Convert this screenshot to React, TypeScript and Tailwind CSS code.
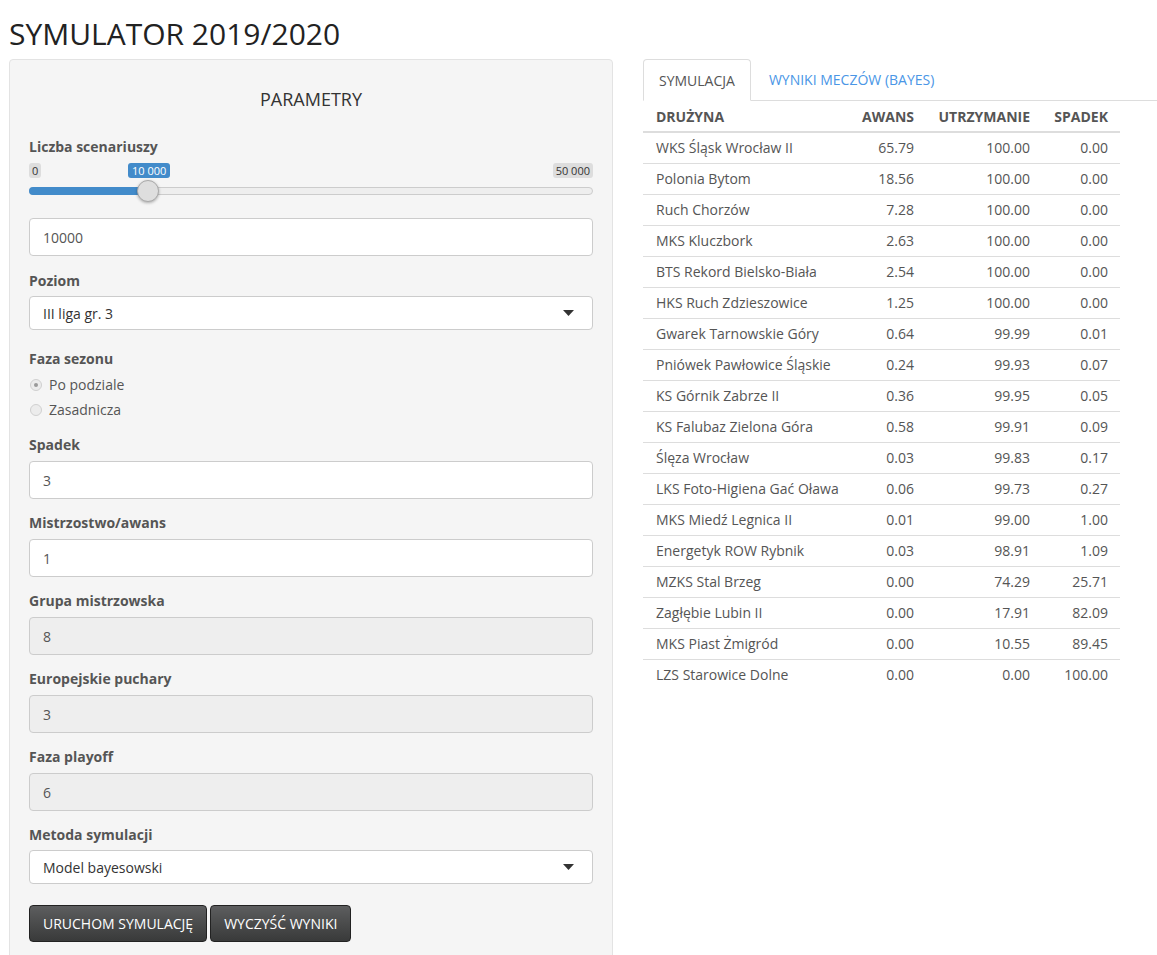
const teams: [string, string, string, string][] = [
  ['WKS Śląsk Wrocław II', '65.79', '100.00', '0.00'],
  ['Polonia Bytom', '18.56', '100.00', '0.00'],
  ['Ruch Chorzów', '7.28', '100.00', '0.00'],
  ['MKS Kluczbork', '2.63', '100.00', '0.00'],
  ['BTS Rekord Bielsko-Biała', '2.54', '100.00', '0.00'],
  ['HKS Ruch Zdzieszowice', '1.25', '100.00', '0.00'],
  ['Gwarek Tarnowskie Góry', '0.64', '99.99', '0.01'],
  ['Pniówek Pawłowice Śląskie', '0.24', '99.93', '0.07'],
  ['KS Górnik Zabrze II', '0.36', '99.95', '0.05'],
  ['KS Falubaz Zielona Góra', '0.58', '99.91', '0.09'],
  ['Ślęza Wrocław', '0.03', '99.83', '0.17'],
  ['LKS Foto-Higiena Gać Oława', '0.06', '99.73', '0.27'],
  ['MKS Miedź Legnica II', '0.01', '99.00', '1.00'],
  ['Energetyk ROW Rybnik', '0.03', '98.91', '1.09'],
  ['MZKS Stal Brzeg', '0.00', '74.29', '25.71'],
  ['Zagłębie Lubin II', '0.00', '17.91', '82.09'],
  ['MKS Piast Żmigród', '0.00', '10.55', '89.45'],
  ['LZS Starowice Dolne', '0.00', '0.00', '100.00'],
]

function Label({ children }: { children: React.ReactNode }) {
  return <div className="h-5 leading-5 font-bold text-[14px] text-[#555]">{children}</div>
}

// zwykłe pole tekstowe (albo wyłączone)
function Field({ label, value, disabled }: { label: string; value: string; disabled?: boolean }) {
  return (
    <div className="mb-[14px]">
      <Label>{label}</Label>
      <div
        className={`mt-[6px] h-[38px] flex items-center px-[13px] border border-[#cccccc] rounded-[4px] text-[14px] text-[#555] ${
          disabled ? 'bg-[#eeeeee]' : 'bg-white'
        }`}
      >
        {value}
      </div>
    </div>
  )
}

function Select({ value }: { value: string }) {
  return (
    <div className="mt-[5px] h-[34px] flex items-center justify-between pl-[13px] pr-[18px] bg-white border border-[#cccccc] rounded-[4px] text-[14px] text-[#333]">
      <span>{value}</span>
      <svg width="11" height="6" viewBox="0 0 11 6">
        <path d="M0 0 L11 0 L5.5 6 Z" fill="#333" />
      </svg>
    </div>
  )
}

function Radio({ label, checked }: { label: string; checked?: boolean }) {
  return (
    <div className="h-[25px] flex items-center gap-[7px] pl-[1px] text-[14px] text-[#555]">
      <span className="w-[12px] h-[12px] rounded-full border border-[#d0d0d0] bg-[#ececec] flex items-center justify-center">
        {checked && <span className="w-[4px] h-[4px] rounded-full bg-[#9a9a9a]" />}
      </span>
      {label}
    </div>
  )
}

function Slider() {
  return (
    <div className="relative h-[55px] mt-[6px]">
      <span className="absolute left-0 top-0 h-[15px] px-[3px] leading-[15px] text-[11px] text-[#333] bg-[#dddddd] rounded-[3px]">0</span>
      <span className="absolute left-[99px] top-0 h-[15px] px-[4px] leading-[15px] text-[11px] text-white bg-[#428bca] rounded-[3px]">10 000</span>
      <span className="absolute right-0 top-0 h-[15px] px-[3px] leading-[15px] text-[11px] text-[#333] bg-[#dddddd] rounded-[3px]">50 000</span>
      <div className="absolute left-0 right-0 top-[24px] h-[8px] rounded-full bg-[#eeeeee] border border-[#cccccc]" />
      <div className="absolute left-0 w-[119px] top-[24px] h-[8px] rounded-l-full bg-[#428bca]" />
      <div className="absolute left-[108px] top-[17px] w-[22px] h-[22px] rounded-full bg-[#dedede] border border-[#aaaaaa] shadow-[0_1px_3px_rgba(0,0,0,0.3)]" />
    </div>
  )
}

export default function App() {
  return (
    <div className="min-h-screen bg-white pl-[9px] pt-[17px] font-['Open_Sans',sans-serif] text-[14px] text-[#555]">
      <h1 className="text-[30px] leading-[33px] text-[#222] font-normal">SYMULATOR 2019/2020</h1>

      <div className="mt-[9px] flex items-start">
        {/* lewa kolumna: parametry */}
        <div className="w-[604px] shrink-0 bg-[#f5f5f5] border border-[#e3e3e3] rounded-[4px] px-[19px] pt-[19px] pb-[20px]">
          <div className="mt-[10px] mb-[28px] h-5 leading-5 text-center text-[18px] text-[#333]">PARAMETRY</div>

          <Label>Liczba scenariuszy</Label>
          <Slider />
          <div className="h-[38px] flex items-center px-[13px] bg-white border border-[#cccccc] rounded-[4px] text-[14px] text-[#555] mb-[15px]">
            10000
          </div>

          <Label>Poziom</Label>
          <Select value="III liga gr. 3" />

          <div className="mt-[19px]">
            <Label>Faza sezonu</Label>
            <div className="mt-[3px] mb-[13px]">
              <Radio label="Po podziale" checked />
              <Radio label="Zasadnicza" />
            </div>
          </div>

          <Field label="Spadek" value="3" />
          <Field label="Mistrzostwo/awans" value="1" />
          <Field label="Grupa mistrzowska" value="8" disabled />
          <Field label="Europejskie puchary" value="3" disabled />
          <Field label="Faza playoff" value="6" disabled />

          <Label>Metoda symulacji</Label>
          <Select value="Model bayesowski" />

          <div className="mt-[21px] flex gap-[3px]">
            <button className="h-[37px] px-[13px] rounded-[4px] border border-[#222] bg-gradient-to-b from-[#5d5e5f] to-[#393a3a] text-white text-[14px]">
              URUCHOM SYMULACJĘ
            </button>
            <button className="h-[37px] px-[13px] rounded-[4px] border border-[#222] bg-gradient-to-b from-[#5d5e5f] to-[#393a3a] text-white text-[14px]">
              WYCZYŚĆ WYNIKI
            </button>
          </div>
        </div>

        {/* prawa kolumna: zakładki i tabela */}
        <div className="ml-[30px] flex-1">
          <div className="flex items-end h-[42px] border-b border-[#dddddd]">
            <div className="h-[42px] -mb-px px-[15px] flex items-center bg-white border border-[#dddddd] border-b-white rounded-t-[4px] text-[#555]">
              SYMULACJA
            </div>
            <div className="h-[41px] pl-[18px] flex items-center text-[#4a96e6]">WYNIKI MECZÓW (BAYES)</div>
          </div>

          <table className="w-[477px] border-collapse text-[14px] text-[#555]">
            <thead>
              <tr className="h-[31px] border-b-2 border-[#dddddd]">
                <th className="w-[208px] pl-[13px] text-left font-bold">DRUŻYNA</th>
                <th className="w-[75px] pr-[12px] text-right font-bold">AWANS</th>
                <th className="w-[116px] pr-[12px] text-right font-bold">UTRZYMANIE</th>
                <th className="w-[78px] pr-[12px] text-right font-bold">SPADEK</th>
              </tr>
            </thead>
            <tbody>
              {teams.map((t, i) => (
                <tr key={t[0]} className={`h-[31px] ${i > 0 ? 'border-t border-[#dddddd]' : ''}`}>
                  <td className="pl-[13px]">{t[0]}</td>
                  <td className="pr-[12px] text-right">{t[1]}</td>
                  <td className="pr-[12px] text-right">{t[2]}</td>
                  <td className="pr-[12px] text-right">{t[3]}</td>
                </tr>
              ))}
            </tbody>
          </table>
        </div>
      </div>
    </div>
  )
}
